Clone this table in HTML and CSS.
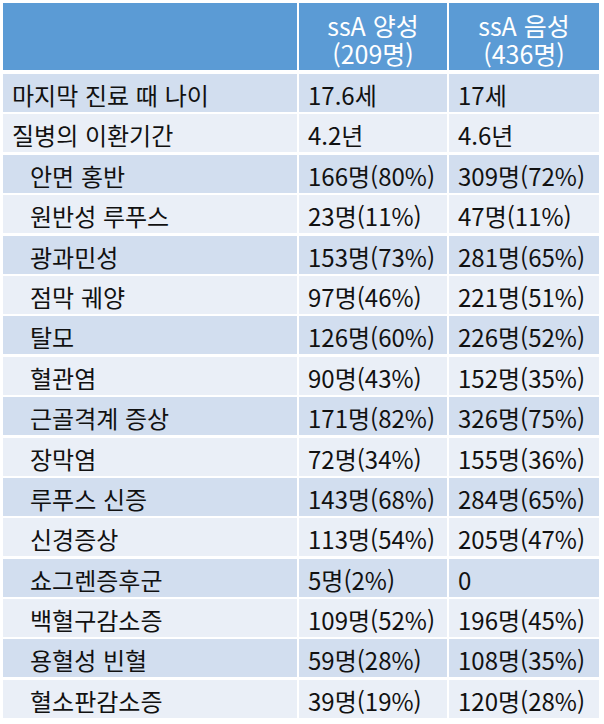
FILE: index.html
```html
<!DOCTYPE html>
<html lang="ko">
<head>
<meta charset="utf-8">
<link rel="stylesheet" href="styles.css">
</head>
<body>
<div class="table">
  <div class="head">
    <div class="hcell"></div>
    <div class="hcell"><span>ssA 양성</span><span>(209명)</span></div>
    <div class="hcell"><span>ssA 음성</span><span>(436명)</span></div>
  </div>
  <div class="body">
    <div class="c odd">마지막 진료 때 나이</div><div class="c odd">17.6세</div><div class="c odd">17세</div>
    <div class="c even">질병의 이환기간</div><div class="c even">4.2년</div><div class="c even">4.6년</div>
    <div class="c odd ind">안면 홍반</div><div class="c odd">166명(80%)</div><div class="c odd">309명(72%)</div>
    <div class="c even ind">원반성 루푸스</div><div class="c even">23명(11%)</div><div class="c even">47명(11%)</div>
    <div class="c odd ind">광과민성</div><div class="c odd">153명(73%)</div><div class="c odd">281명(65%)</div>
    <div class="c even ind">점막 궤양</div><div class="c even">97명(46%)</div><div class="c even">221명(51%)</div>
    <div class="c odd ind">탈모</div><div class="c odd">126명(60%)</div><div class="c odd">226명(52%)</div>
    <div class="c even ind">혈관염</div><div class="c even">90명(43%)</div><div class="c even">152명(35%)</div>
    <div class="c odd ind">근골격계 증상</div><div class="c odd">171명(82%)</div><div class="c odd">326명(75%)</div>
    <div class="c even ind">장막염</div><div class="c even">72명(34%)</div><div class="c even">155명(36%)</div>
    <div class="c odd ind">루푸스 신증</div><div class="c odd">143명(68%)</div><div class="c odd">284명(65%)</div>
    <div class="c even ind">신경증상</div><div class="c even">113명(54%)</div><div class="c even">205명(47%)</div>
    <div class="c odd ind">쇼그렌증후군</div><div class="c odd">5명(2%)</div><div class="c odd">0</div>
    <div class="c even ind">백혈구감소증</div><div class="c even">109명(52%)</div><div class="c even">196명(45%)</div>
    <div class="c odd ind">용혈성 빈혈</div><div class="c odd">59명(28%)</div><div class="c odd">108명(35%)</div>
    <div class="c even ind">혈소판감소증</div><div class="c even">39명(19%)</div><div class="c even">120명(28%)</div>
  </div>
</div>
</body>
</html>
```
FILE: styles.css
```css
html, body {
  margin: 0;
  padding: 0;
  background: #ffffff;
}
body {
  font-family: "Noto Sans CJK KR", "Noto Sans", sans-serif;
  color: #111111;
}
.table {
  margin: 3px 0 0 3px;
  width: 596px;
}
.head, .body {
  display: grid;
  grid-template-columns: 294px 148px 150px;
  column-gap: 2px;
}
.head {
  height: 67px;
}
.body {
  margin-top: 4px;
  grid-auto-rows: 38px;
  row-gap: 2.4px;
}
.hcell {
  background: #5b9bd5;
  color: #ffffff;
  display: flex;
  flex-direction: column;
  align-items: center;
  justify-content: flex-start;
  padding-top: 8px;
  box-sizing: border-box;
  font-size: 25px;
  line-height: 28px;
}
.c {
  display: flex;
  align-items: center;
  padding-left: 9px;
  padding-top: 4px;
  box-sizing: border-box;
  font-size: 24px;
  line-height: 30px;
  white-space: nowrap;
}
.c.ind {
  padding-left: 27px;
}
.odd {
  background: #d2deef;
}
.even {
  background: #eaeff7;
}
```
